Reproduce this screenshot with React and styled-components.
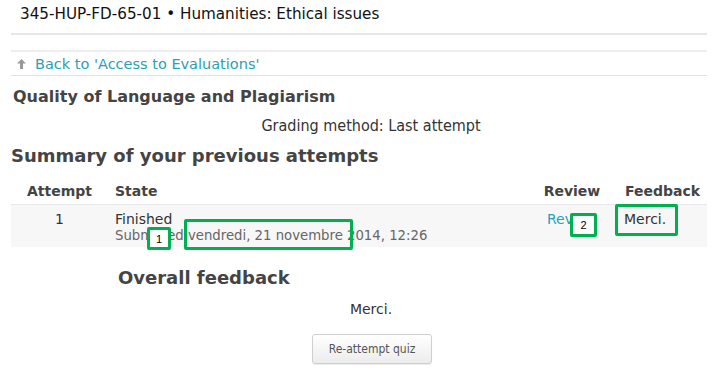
import React from 'react';
import styled, { createGlobalStyle } from 'styled-components';

const GlobalStyle = createGlobalStyle`
  body {
    margin: 0;
    background: #fff;
    font-family: 'DejaVu Sans', Verdana, sans-serif;
    color: #333;
  }
`;

const Page = styled.div`
  width: 724px;
  height: 376px;
  position: relative;
  overflow: hidden;
`;

const CourseTitle = styled.div`
  padding: 4px 0 0 20px;
  height: 29px;
  font-size: 15.2px;
  line-height: 20px;
  color: #111;
`;

const Content = styled.div`
  margin-left: 11px;
  width: 696px;
`;

const Rule = styled.div`
  height: ${(p) => p.$h || 2}px;
  background: ${(p) => p.$c || '#ebebeb'};
  margin-top: ${(p) => p.$mt || 0}px;
`;

const BackRow = styled.div`
  display: flex;
  align-items: center;
  height: 22px;
  padding: 1px 0 0 6px;
  gap: 9px;
  font-size: 14.5px;
`;

const BackLink = styled.a`
  color: #2a9fb5;
  text-decoration: none;
`;

const QuizName = styled.h2`
  margin: 0;
  padding: 10px 0 0 2px;
  font-size: 16px;
  line-height: 21px;
  font-weight: bold;
  color: #444;
`;

const Grading = styled.div`
  text-align: center;
  padding: 9px 0 0 24px;
  font-size: 16px;
  line-height: 20px;
  font-stretch: condensed;
  font-family: 'DejaVu Sans Condensed', 'DejaVu Sans', sans-serif;
  color: #333;
`;

const SectionTitle = styled.h3`
  margin: 0;
  padding: ${(p) => p.$pad};
  font-size: 18px;
  line-height: 24px;
  font-weight: bold;
  color: #444;
`;

const Table = styled.div`
  margin-top: 12px;
`;

const Row = styled.div`
  display: grid;
  grid-template-columns: 97px 1fr 84px 93px;
  background: ${(p) => (p.$head ? 'transparent' : '#f7f7f7')};
  border-top: ${(p) => (p.$head ? 'none' : '1px solid #e8e8e8')};
  height: ${(p) => (p.$head ? 24 : 42)}px;
`;

const Cell = styled.div`
  text-align: ${(p) => p.$align || 'left'};
  padding: ${(p) => (p.$head ? '2px' : '5px')} 0 0 ${(p) => p.$pl || 0}px;
  font-size: 14px;
  line-height: 18px;
  font-weight: ${(p) => (p.$head ? 'bold' : 'normal')};
  color: ${(p) => (p.$head ? '#444' : '#333')};
`;

const SubLine = styled.div`
  font-size: 13.25px;
  line-height: 15px;
  color: #666;
`;

const ReviewLink = styled.a`
  color: #2a9fb5;
  text-decoration: none;
`;

const FeedbackText = styled.div`
  text-align: center;
  padding: 10px 0 0 24px;
  font-size: 14px;
  line-height: 18px;
  color: #333;
`;

const ButtonRow = styled.div`
  display: flex;
  justify-content: center;
  padding: 16px 0 0 26px;
`;

const Button = styled.button`
  width: 120px;
  height: 30px;
  border: 1px solid #cfcfcf;
  border-radius: 3px;
  background: linear-gradient(#ffffff, #ececec);
  box-shadow: 0 1px 1px rgba(0, 0, 0, 0.08);
  font-family: 'DejaVu Sans Condensed', 'DejaVu Sans', sans-serif;
  font-stretch: condensed;
  font-size: 12px;
  color: #555;
`;

const Marker = styled.div`
  position: absolute;
  left: ${(p) => p.$x}px;
  top: ${(p) => p.$y}px;
  width: ${(p) => p.$w}px;
  height: ${(p) => p.$h}px;
  border: 3px solid #00b050;
  border-radius: 2px;
  box-sizing: border-box;
  background: ${(p) => (p.$fill ? '#fff' : 'transparent')};
  display: flex;
  align-items: center;
  justify-content: center;
  font-family: 'Liberation Sans', Arial, sans-serif;
  font-size: 11px;
  color: #000;
`;

const ArrowUp = () => (
  <svg width="9" height="10" viewBox="0 0 9 10">
    <path d="M4.5 0 L9 4.5 L6 4.5 L6 10 L3 10 L3 4.5 L0 4.5 Z" fill="#999" />
  </svg>
);

export default function App() {
  return (
    <Page>
      <GlobalStyle />
      <CourseTitle>345-HUP-FD-65-01 • Humanities: Ethical issues</CourseTitle>
      <Content>
        <Rule $h={2} $c="#e6e6e6" />
        <Rule $h={2} $c="#eeeeee" $mt={15} />
        <BackRow>
          <ArrowUp />
          <BackLink href="#">Back to 'Access to Evaluations'</BackLink>
        </BackRow>
        <Rule $h={1} $c="#e3e3e3" />
        <QuizName>Quality of Language and Plagiarism</QuizName>
        <Grading>Grading method: Last attempt</Grading>
        <SectionTitle $pad="8px 0 0 0">Summary of your previous attempts</SectionTitle>
        <Table>
          <Row $head>
            <Cell $head $align="center">Attempt</Cell>
            <Cell $head $pl={7}>State</Cell>
            <Cell $head $align="center">Review</Cell>
            <Cell $head $pl={11}>Feedback</Cell>
          </Row>
          <Row>
            <Cell $align="center">1</Cell>
            <Cell $pl={7}>
              Finished
              <SubLine>Submitted vendredi, 21 novembre 2014, 12:26</SubLine>
            </Cell>
            <Cell $align="center">
              <ReviewLink href="#">Review</ReviewLink>
            </Cell>
            <Cell $pl={10}>Merci.</Cell>
          </Row>
        </Table>
        <SectionTitle $pad="19px 0 0 107px">Overall feedback</SectionTitle>
        <FeedbackText>Merci.</FeedbackText>
        <ButtonRow>
          <Button>Re-attempt quiz</Button>
        </ButtonRow>
      </Content>
      <Marker $x={147} $y={227} $w={24} $h={23} $fill>1</Marker>
      <Marker $x={184} $y={219} $w={169} $h={31} />
      <Marker $x={570} $y={213} $w={27} $h={24} $fill>2</Marker>
      <Marker $x={615} $y={204} $w={63} $h={32} />
    </Page>
  );
}
